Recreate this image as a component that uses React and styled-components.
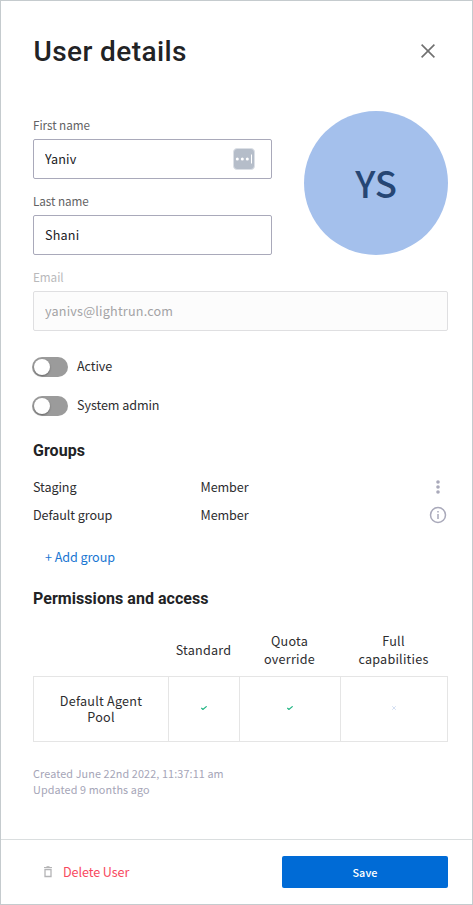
import React from "react";
import styled, { createGlobalStyle } from "styled-components";

const GlobalStyle = createGlobalStyle`
  * { box-sizing: border-box; }
  body {
    margin: 0;
    background: #fff;
    color: #2d2d2f;
    font-family: "Noto Sans CJK SC", "Noto Sans", sans-serif;
    font-size: 12.6px;
    letter-spacing: -0.08px;
  }
  button, input { font-family: inherit; letter-spacing: inherit; }
`;

const Panel = styled.section`
  display: flex;
  flex-direction: column;
  width: 473px;
  height: 905px;
  border: 1px solid #c5cbce;
  overflow: hidden;
`;

const Header = styled.header`
  display: flex;
  align-items: center;
  justify-content: space-between;
  height: 100px;
  padding: 0 36px 0 32.5px;
`;

const Title = styled.h1`
  margin: 2px 0 0;
  font: 500 28px/40px Roboto, sans-serif;
  letter-spacing: 0.4px;
  color: #222325;
`;

const IconButton = styled.button`
  display: flex;
  align-items: center;
  justify-content: center;
  width: ${(p) => p.$size}px;
  height: ${(p) => p.$size}px;
  padding: 0;
  border: 0;
  background: none;
`;

const Content = styled.main`
  flex: 1;
  padding: 14px 24px 0 32px;
`;

const Profile = styled.div`
  display: flex;
  justify-content: space-between;
`;

const Names = styled.div`
  width: 239px;
`;

const Field = styled.label`
  display: block;
  margin-bottom: 12px;
`;

const Caption = styled.span`
  display: block;
  height: 20px;
  margin-bottom: 4px;
  font-size: 11.7px;
  line-height: 20px;
  letter-spacing: -0.05px;
  color: ${(p) => (p.$disabled ? "#b9b9bb" : "#626264")};
`;

const InputBox = styled.span`
  display: flex;
  align-items: center;
  height: 40px;
  padding: 0 16px 0 11px;
  border: 1px solid ${(p) => (p.$disabled ? "#dfdfe1" : "#a9a9ba")};
  border-radius: 2px;
  background: ${(p) => (p.$disabled ? "#fcfcfc" : "#fff")};
`;

const TextInput = styled.input`
  flex: 1;
  min-width: 0;
  height: 38px;
  padding: 0 0 1px;
  border: 0;
  outline: 0;
  background: transparent;
  font-size: 12.6px;
  letter-spacing: 0.2px;
  color: #202124;
  &:disabled { color: #a3a3a5; }
`;

const Avatar = styled.div`
  display: flex;
  align-items: center;
  justify-content: center;
  width: 144px;
  height: 144px;
  margin-top: -4px;
  padding-bottom: 1px;
  border-radius: 50%;
  background: #a4c0ec;
  color: #264674;
  font-size: 36.5px;
  font-weight: 500;
  letter-spacing: 0;
  line-height: 48px;
`;

const Switches = styled.div`
  display: flex;
  flex-direction: column;
  gap: 19px;
  margin: 26px 0 0 -1px;
`;

const SwitchRow = styled.label`
  display: flex;
  align-items: center;
  gap: 9px;
  height: 20px;
  line-height: 18px;
`;

const SwitchText = styled.span`
  height: 20px;
`;

const Track = styled.span`
  display: flex;
  align-items: center;
  width: 36px;
  height: 20px;
  padding-left: 2px;
  border-radius: 10px;
  background: #9b9b9b;
  &::before {
    content: "";
    width: 16px;
    height: 16px;
    border-radius: 50%;
    background: #fff;
    box-shadow: 0 1px 2px rgba(0, 0, 0, 0.35);
  }
`;

const SectionTitle = styled.h2`
  margin: ${(p) => p.$top}px 0 0;
  font: 700 16px/24px Roboto, sans-serif;
  letter-spacing: 0.05px;
  color: #222325;
`;

const Groups = styled.div`
  margin-top: 10px;
`;

const GroupRow = styled.div`
  display: grid;
  grid-template-columns: 167.5px 1fr 20px;
  align-items: center;
  height: 28px;
`;

const GroupText = styled.span`
  height: 20px;
  line-height: 20px;
`;

const AddGroup = styled.button`
  display: block;
  height: 32px;
  margin-top: 12px;
  padding: 0 12px;
  border: 0;
  background: none;
  color: #1976d2;
  font-size: 12.6px;
  line-height: 20px;
`;

const Permissions = styled.div`
  margin-top: 13px;
  text-align: center;
  letter-spacing: 0.23px;
`;

const PermissionRow = styled.div`
  display: grid;
  grid-template-columns: 136px 71px 101px 107px;
  align-items: ${(p) => (p.$head ? "center" : "stretch")};
  height: ${(p) => (p.$head ? 52 : 66)}px;
  line-height: ${(p) => (p.$head ? 18 : 16)}px;
`;

const HeadCell = styled.div`
  padding: 0 9px 0 7px;
  margin: 0 -10px;
`;

const Cell = styled.div`
  display: flex;
  align-items: center;
  justify-content: center;
  padding: 0 22px;
  border: 1px solid #e5e5e5;
  border-left-width: ${(p) => (p.$first ? 1 : 0)}px;
  & > svg { margin-bottom: 2px; }
`;

const Timestamps = styled.div`
  margin-top: 23px;
  font-size: 10.8px;
  line-height: 16px;
  letter-spacing: 0.12px;
  color: #a5a5b7;
`;

const Footer = styled.footer`
  display: flex;
  align-items: center;
  justify-content: space-between;
  height: 65px;
  padding: 0 24px 0 41px;
  border-top: 1px solid #dadedf;
`;

const DeleteButton = styled.button`
  display: flex;
  align-items: center;
  gap: 9px;
  padding: 0;
  border: 0;
  background: none;
  color: #f8485e;
  font-size: 12.6px;
  line-height: 20px;
`;

const SaveButton = styled.button`
  width: 166px;
  height: 32px;
  padding: 0 0 1px;
  border: 0;
  border-radius: 2px;
  background: #006bd6;
  color: #fff;
  font-size: 10.8px;
  font-weight: 500;
  letter-spacing: 0.1px;
`;

const CloseIcon = () => (
  <svg width="14" height="14" viewBox="0 0 14 14" fill="none" stroke="#707070" strokeWidth="1.6">
    <path d="M.6.6l12.8 12.8M13.4.6L.6 13.4" />
  </svg>
);

const AutofillIcon = () => (
  <svg width="22" height="22" viewBox="0 0 22 22">
    <rect x=".5" y=".5" width="21" height="21" rx="3.5" fill="#b5bdc9" stroke="#dce0e6" />
    <g fill="#fff">
      <circle cx="4.3" cy="11" r="1.5" />
      <circle cx="9.3" cy="11" r="1.5" />
      <circle cx="14.3" cy="11" r="1.5" />
      <rect x="18" y="6.5" width="1" height="9" />
    </g>
  </svg>
);

const MoreIcon = () => (
  <svg width="20" height="20" viewBox="0 0 20 20" fill="#a9a9ba">
    <circle cx="10" cy="5" r="1.8" />
    <circle cx="10" cy="10" r="1.8" />
    <circle cx="10" cy="15" r="1.8" />
  </svg>
);

const InfoIcon = () => (
  <svg width="20" height="20" viewBox="0 0 20 20" fill="none" stroke="#a9a9ba" strokeWidth="1.5">
    <circle cx="10" cy="10" r="7.5" />
    <path d="M10 9v5M10 6v1.5" />
  </svg>
);

const CheckIcon = () => (
  <svg width="6" height="4" viewBox="0 0 6 4" fill="none" stroke="#20b583" strokeWidth="1.15">
    <path d="M.3 2l1.6 1.5L5.7.3" />
  </svg>
);

const CrossIcon = () => (
  <svg width="4" height="4" viewBox="0 0 4 4" fill="none" stroke="#c8d7ef" strokeWidth=".8">
    <path d="M.2.2l3.6 3.6M3.8.2L.2 3.8" />
  </svg>
);

const TrashIcon = () => (
  <svg width="12" height="12" viewBox="0 0 12 12" fill="none" stroke="#b4b4b6">
    <path d="M3 3.5v7h6v-7z" strokeWidth="1.3" />
    <path d="M2 1.5h8M4.5.7h3" />
  </svg>
);

const groups = [
  { name: "Staging", role: "Member", Icon: MoreIcon },
  { name: "Default group", role: "Member", Icon: InfoIcon },
];

function TextField({ label, value, disabled, children }) {
  return (
    <Field>
      <Caption $disabled={disabled}>{label}</Caption>
      <InputBox $disabled={disabled}>
        <TextInput defaultValue={value} disabled={disabled} />
        {children}
      </InputBox>
    </Field>
  );
}

export default function App() {
  return (
    <>
      <GlobalStyle />
      <Panel>
        <Header>
          <Title>User details</Title>
          <IconButton $size={16} aria-label="Close"><CloseIcon /></IconButton>
        </Header>
        <Content>
          <Profile>
            <Names>
              <TextField label="First name" value="Yaniv"><AutofillIcon /></TextField>
              <TextField label="Last name" value="Shani" />
            </Names>
            <Avatar>YS</Avatar>
          </Profile>
          <TextField label="Email" value="yanivs@lightrun.com" disabled />
          <Switches>
            <SwitchRow><Track /><SwitchText>Active</SwitchText></SwitchRow>
            <SwitchRow><Track /><SwitchText>System admin</SwitchText></SwitchRow>
          </Switches>
          <SectionTitle $top={23}>Groups</SectionTitle>
          <Groups>
            {groups.map(({ name, role, Icon }) => (
              <GroupRow key={name}>
                <GroupText>{name}</GroupText>
                <GroupText>{role}</GroupText>
                <IconButton $size={20} aria-label={name}><Icon /></IconButton>
              </GroupRow>
            ))}
          </Groups>
          <AddGroup>+ Add group</AddGroup>
          <SectionTitle $top={14}>Permissions and access</SectionTitle>
          <Permissions>
            <PermissionRow $head>
              <span />
              <HeadCell>Standard</HeadCell>
              <HeadCell>Quota<br />override</HeadCell>
              <HeadCell>Full<br />capabilities</HeadCell>
            </PermissionRow>
            <PermissionRow>
              <Cell $first>Default Agent Pool</Cell>
              <Cell><CheckIcon /></Cell>
              <Cell><CheckIcon /></Cell>
              <Cell><CrossIcon /></Cell>
            </PermissionRow>
          </Permissions>
          <Timestamps>
            <div>Created June 22nd 2022, 11:37:11 am</div>
            <div>Updated 9 months ago</div>
          </Timestamps>
        </Content>
        <Footer>
          <DeleteButton><TrashIcon />Delete User</DeleteButton>
          <SaveButton>Save</SaveButton>
        </Footer>
      </Panel>
    </>
  );
}
